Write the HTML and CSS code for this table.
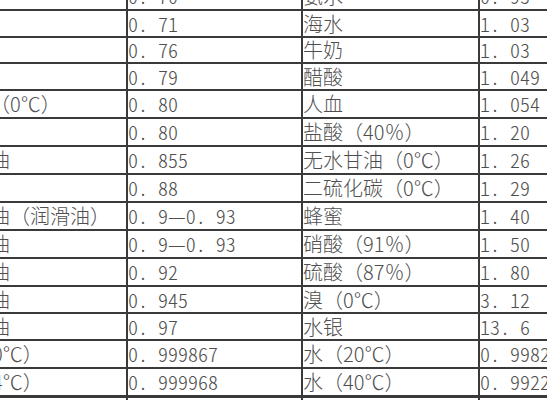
FILE: index.html
```html
<!DOCTYPE html>
<html lang="zh-CN">
<head>
<meta charset="utf-8">
<title>常见液体的密度</title>
<link rel="stylesheet" href="styles.css">
</head>
<body>
<div class="sheet">
  <div class="grid">
    <div class="c name">汽油</div><div class="c num">0.&ensp;70</div><div class="c">氨水</div><div class="c num">0.&ensp;93</div>
    <div class="c name">乙醚</div><div class="c num">0.&ensp;71</div><div class="c">海水</div><div class="c num">1.&ensp;03</div>
    <div class="c name">石油</div><div class="c num">0.&ensp;76</div><div class="c">牛奶</div><div class="c num">1.&ensp;03</div>
    <div class="c name">酒精</div><div class="c num">0.&ensp;79</div><div class="c">醋酸</div><div class="c num">1.&ensp;049</div>
    <div class="c name">酒精（0℃）</div><div class="c num">0.&ensp;80</div><div class="c">人血</div><div class="c num">1.&ensp;054</div>
    <div class="c name">煤油</div><div class="c num">0.&ensp;80</div><div class="c">盐酸（40％）</div><div class="c num">1.&ensp;20</div>
    <div class="c name">松节油</div><div class="c num">0.&ensp;855</div><div class="c">无水甘油（0℃）</div><div class="c num">1.&ensp;26</div>
    <div class="c name">甲苯</div><div class="c num">0.&ensp;88</div><div class="c">二硫化碳（0℃）</div><div class="c num">1.&ensp;29</div>
    <div class="c name">汽机油（润滑油）</div><div class="c num">0.&ensp;9—0.&ensp;93</div><div class="c">蜂蜜</div><div class="c num">1.&ensp;40</div>
    <div class="c name">植物油</div><div class="c num">0.&ensp;9—0.&ensp;93</div><div class="c">硝酸（91％）</div><div class="c num">1.&ensp;50</div>
    <div class="c name">花生油</div><div class="c num">0.&ensp;92</div><div class="c">硫酸（87％）</div><div class="c num">1.&ensp;80</div>
    <div class="c name">棉籽油</div><div class="c num">0.&ensp;945</div><div class="c">溴（0℃）</div><div class="c num">3.&ensp;12</div>
    <div class="c name">蓖麻油</div><div class="c num">0.&ensp;97</div><div class="c">水银</div><div class="c num">13.&ensp;6</div>
    <div class="c name water">水（0℃）</div><div class="c num">0.&ensp;999867</div><div class="c">水（20℃）</div><div class="c num">0.&ensp;9982</div>
    <div class="c name water last">水（4℃）</div><div class="c num last">0.&ensp;999968</div><div class="c last">水（40℃）</div><div class="c num last">0.&ensp;9922</div>
    <div class="c name">海水（4℃）</div><div class="c num">1.&ensp;028</div><div class="c">水（100℃）</div><div class="c num">0.&ensp;9584</div>
  </div>
</div>
</body>
</html>
```

FILE: styles.css
```css
html, body {
  margin: 0;
  padding: 0;
  background: #ffffff;
}

.sheet {
  width: 547px;
  height: 400px;
  overflow: hidden;
}

.grid {
  display: grid;
  grid-template-columns: 188px 175px 177px 160px;
  grid-template-rows: 28px 27px 26px 27px 28px 28px 28px 28px 28px 28px 28px 27px 27px 28px 29px 30px;
  margin-left: -60px;
  margin-top: -17px;
  width: 700px;
  font-family: "Noto Sans CJK SC", "Noto Sans", sans-serif;
  font-weight: 300;
  font-size: 20px;
  color: #4f4f4f;
}

.c {
  box-sizing: border-box;
  display: flex;
  align-items: center;
  white-space: nowrap;
  border-right: 2px solid #3a3a3a;
  border-bottom: 2px solid #3a3a3a;
  padding-left: 0;
  line-height: 1;
}

.num {
  font-feature-settings: "hwid" 1;
}

.name {
  padding-left: 10px;
}

.water {
  padding-left: 12px;
}

.last {
  border-bottom-width: 3px;
}
```
